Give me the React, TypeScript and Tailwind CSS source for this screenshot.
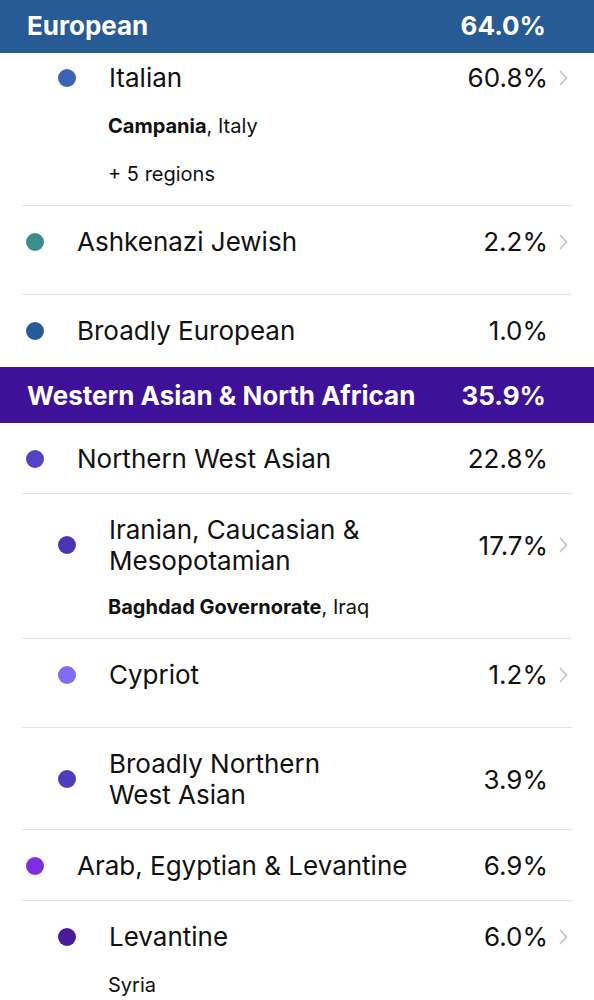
import React from "react";

type Row = {
  level: 1 | 2;
  color: string;
  name: string[];
  pct: string;
  chevron?: boolean;
  sub?: React.ReactNode[];
  pad?: string;
  subGap?: string;
};

const european: Row[] = [
  {
    level: 2,
    color: "bg-[#3a63b4]",
    name: ["Italian"],
    pct: "60.8%",
    chevron: true,
    pad: "pt-[9px] pb-[19px]",
    sub: [
      <>
        <span className="font-bold">Campania</span>, Italy
      </>,
      <>+ 5 regions</>,
    ],
  },
  { level: 1, color: "bg-[#3c8e8c]", name: ["Ashkenazi Jewish"], pct: "2.2%", chevron: true, pad: "pt-[20px] pb-[37px]" },
  { level: 1, color: "bg-[#275a98]", name: ["Broadly European"], pct: "1.0%", pad: "pt-[20px] pb-[21px]" },
];

const westAsian: Row[] = [
  { level: 1, color: "bg-[#5443c4]", name: ["Northern West Asian"], pct: "22.8%" },
  {
    level: 2,
    color: "bg-[#4a35b4]",
    name: ["Iranian, Caucasian &", "Mesopotamian"],
    pct: "17.7%",
    chevron: true,
    subGap: "mt-[19px]",
    sub: [
      <>
        <span className="font-bold">Baghdad Governorate</span>, Iraq
      </>,
    ],
  },
  { level: 2, color: "bg-[#7e6cf2]", name: ["Cypriot"], pct: "1.2%", chevron: true, pad: "pt-[20px] pb-[37px]" },
  { level: 2, color: "bg-[#4d3dbd]", name: ["Broadly Northern", "West Asian"], pct: "3.9%" },
  { level: 1, color: "bg-[#7d2fe0]", name: ["Arab, Egyptian & Levantine"], pct: "6.9%" },
  {
    level: 2,
    color: "bg-[#4a1a9c]",
    name: ["Levantine"],
    pct: "6.0%",
    chevron: true,
    sub: [<>Syria</>],
  },
];

const Chevron = () => (
  <svg width="9" height="16" viewBox="0 0 9 16" fill="none">
    <path d="M1.5 1.5L7.5 8L1.5 14.5" stroke="#c4c4c6" strokeWidth="1.8" strokeLinecap="round" strokeLinejoin="round" />
  </svg>
);

const Header = ({ title, pct, color, tall }: { title: string; pct: string; color: string; tall?: boolean }) => (
  <div
    className={`${color} ${tall ? "h-[56px]" : "h-[53px] pb-[3px]"} flex items-center justify-between pl-[27px] pr-[48px] text-white font-bold text-[26px]`}
  >
    <span>{title}</span>
    <span>{pct}</span>
  </div>
);

const Item = ({ row, border }: { row: Row; border: boolean }) => (
  <div className={`mx-[22px] ${row.pad ?? "pt-[20px] pb-[19px]"} ${border ? "border-b border-[#e3e3e5]" : ""}`}>
    <div className="flex items-center">
      <div className={`${row.level === 2 ? "pl-[36px]" : "pl-[4px]"} pr-[33px] shrink-0`}>
        <div className={`w-[18px] h-[18px] rounded-full ${row.color}`} />
      </div>
      <div className="flex-1 text-[26px] leading-[31px] text-[#111]">
        {row.name.map((n, i) => (
          <div key={i}>{n}</div>
        ))}
      </div>
      <div className="text-[26px] leading-[31px] text-[#111]">{row.pct}</div>
      <div className="w-[24px] pl-[11px] shrink-0 flex items-center">{row.chevron && <Chevron />}</div>
    </div>
    {row.sub && (
      <div className={`${row.level === 2 ? "pl-[86px]" : "pl-[55px]"} text-[20px] leading-[24px] text-[#111]`}>
        {row.sub.map((s, i) => (
          <div key={i} className={i === 0 ? row.subGap ?? "mt-[21px]" : "mt-[24px]"}>
            {s}
          </div>
        ))}
      </div>
    )}
  </div>
);

export default function App() {
  return (
    <div className="w-[594px] h-[1000px] overflow-hidden bg-white" style={{ fontFamily: "Inter, 'Noto Sans', sans-serif" }}>
      <Header title="European" pct="64.0%" color="bg-[#275b96]" />
      {european.map((r, i) => (
        <Item key={i} row={r} border={i < european.length - 1} />
      ))}
      <Header title="Western Asian & North African" pct="35.9%" color="bg-[#3d1299]" tall />
      {westAsian.map((r, i) => (
        <Item key={i} row={r} border={i < westAsian.length - 1} />
      ))}
    </div>
  );
}
